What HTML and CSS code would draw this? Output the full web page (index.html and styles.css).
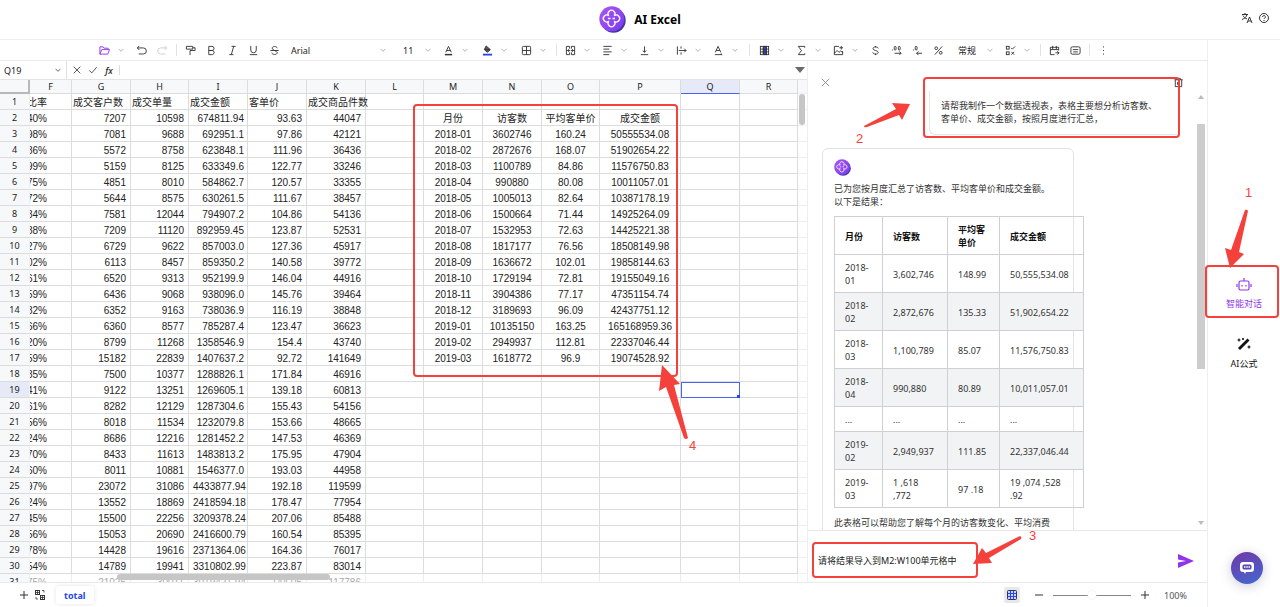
FILE: index.html
```html
<!DOCTYPE html>
<html lang="zh-CN">
<head>
<meta charset="utf-8">
<title>AI Excel</title>
<link rel="stylesheet" href="styles.css">
</head>
<body>
<svg class="defs" aria-hidden="true">
  <defs>
    <linearGradient id="badge" x1="0" y1="0" x2="1" y2="1"><stop offset="0" stop-color="#a855f7"/><stop offset="1" stop-color="#7c3aed"/></linearGradient>
    <symbol id="chev" viewBox="0 0 6 6"><path d="M0.500 1.800l2.500 2.500 2.500-2.500" fill="none" stroke="currentColor" stroke-width="0.900"/></symbol>
    <symbol id="logo" viewBox="0 0 27 27">
      <circle cx="14.5" cy="14.5" r="12.2" fill="#4338a8"/>
      <circle cx="12.8" cy="12.8" r="12.5" fill="url(#badge)"/>
      <path d="M9.800 9.800a3.400 3.400 0 1 1 5.400 0a3.400 3.400 0 1 1 0 5.400a3.400 3.400 0 1 1-5.400 0a3.400 3.400 0 1 1 0-5.400M9 12.500h2.500M13.500 12.500H16" fill="none" stroke="#fff" stroke-width="1.300"/>
    </symbol>
  </defs>
</svg>

<header class="topbar">
  <div class="brand"><svg class="brand-logo"><use href="#logo"/></svg><h1>AI Excel</h1></div>
  <div class="top-actions">
    <button aria-label="语言"><svg class="ico" viewBox="0 0 12 12"><path d="M1 2.5h6M4 1v1.500M6 2.500C5.500 5 3.500 6.500 1 7.500M2 3.500C3 5.500 4.500 6.500 6 7M6 11l2.500-6 2.500 6M7 9h3"/></svg></button>
    <button aria-label="帮助"><svg class="ico" viewBox="0 0 12 12"><circle cx="6" cy="6" r="4.500"/><path d="M4.600 5a1.400 1.400 0 1 1 2 1.200Q6 6.500 6 7M6 8v1"/></svg></button>
  </div>
</header>

<div class="shell">
  <div class="workspace">
    <div class="toolbar" role="toolbar">
      <button class="tool purple" aria-label="打开"><svg class="ico" viewBox="0 0 12 12"><path d="M1 10V2h3.500l1 1.500H10V5M1 10l2-5h8.500l-2 5z"/></svg></button><button class="chev" aria-label="更多"><svg><use href="#chev"/></svg></button>
      <button class="tool" aria-label="撤销"><svg class="ico" viewBox="0 0 12 12"><path d="M3.500 1L1.500 3.200l2 2.200M1.500 3.200H8a3.300 3.300 0 0 1 0 6.600H3"/></svg></button>
      <button class="tool off" aria-label="重做"><svg class="ico" viewBox="0 0 12 12"><path d="M8.500 1l2 2.200-2 2.200M10.500 3.200H4a3.300 3.300 0 0 0 0 6.600h5"/></svg></button>
      <i class="sep"></i>
      <button class="tool" aria-label="格式刷"><svg class="ico" viewBox="0 0 12 12"><path d="M1.500 1.500h7v3h-7zM8.500 3H11v3H5.500v2M5.500 8v3"/></svg></button>
      <button class="tool" aria-label="粗体"><svg class="ico" viewBox="0 0 12 12"><path d="M3 1.500h3.500a2.200 2.200 0 0 1 0 4.500H3zM3 6h4a2.300 2.300 0 0 1 0 4.500H3z"/></svg></button>
      <button class="tool" aria-label="斜体"><svg class="ico" viewBox="0 0 12 12"><path d="M5 1.500h4.500M2.500 10.500H7M7.300 1.500l-2.600 9"/></svg></button>
      <button class="tool" aria-label="下划线"><svg class="ico" viewBox="0 0 12 12"><path d="M3 1v4.500a3 3 0 0 0 6 0V1M2 10.500h8"/></svg></button>
      <button class="tool" aria-label="删除线"><svg class="ico" viewBox="0 0 12 12"><path d="M9 3.500C8.500 1 3.500 1 3.500 3.500Q3.500 5 6 6t3 2.300c0 2.700-5.500 2.700-6 0M1.500 6h9"/></svg></button>
      <button class="pick font">Arial</button><button class="chev" aria-label="字体"><svg><use href="#chev"/></svg></button>
      <button class="pick size">11</button><button class="chev" aria-label="字号"><svg><use href="#chev"/></svg></button>
      <button class="tool" aria-label="文字颜色"><svg class="ico" viewBox="0 0 12 12"><path d="M3 8l3-6.500L9 8M4 6h4"/><path d="M2 10.500h8" stroke-width="1.600"/></svg></button><button class="chev wide" aria-label="更多"><svg><use href="#chev"/></svg></button>
      <button class="tool" aria-label="填充颜色"><svg class="ico" viewBox="0 0 12 12"><path d="M4.500 1l4.500 4-3 3-3.500-3zM3 5h6" fill="#555"/><path d="M1 10.500h10" stroke="#2647f0" stroke-width="2"/></svg></button><button class="chev wide" aria-label="更多"><svg><use href="#chev"/></svg></button>
      <button class="tool" aria-label="边框"><svg class="ico" viewBox="0 0 12 12"><rect x="1.500" y="1.500" width="9" height="9" rx="1"/><path d="M6 1.500v9M1.500 6h9"/></svg></button><button class="chev" aria-label="更多"><svg><use href="#chev"/></svg></button>
      <i class="sep"></i>
      <button class="tool" aria-label="合并"><svg class="ico" viewBox="0 0 12 12"><path d="M5 4V1.500H1.500v9H5V8M7 4V1.500h3.500v9H7V8M1.500 6H5M7 6h3.500M3.500 4.500L5 6 3.500 7.500M8.500 4.500L7 6l1.500 1.500"/></svg></button><button class="chev" aria-label="更多"><svg><use href="#chev"/></svg></button>
      <button class="tool" aria-label="水平对齐"><svg class="ico" viewBox="0 0 12 12"><path d="M1.500 1.500h9M1.500 4.500H8M1.500 7.500h9M1.500 10.500H8"/></svg></button><button class="chev" aria-label="更多"><svg><use href="#chev"/></svg></button>
      <button class="tool" aria-label="垂直对齐"><svg class="ico" viewBox="0 0 12 12"><path d="M6 1.500V8M4 6l2 2 2-2M2 10.500h8"/></svg></button><button class="chev" aria-label="更多"><svg><use href="#chev"/></svg></button>
      <button class="tool" aria-label="换行"><svg class="ico" viewBox="0 0 12 12"><path d="M1.500 1.500v9M5.500 1.500v2.500M5.500 8v2.500M3 6h8M9 4l2 2-2 2"/></svg></button><button class="chev" aria-label="更多"><svg><use href="#chev"/></svg></button>
      <button class="tool" aria-label="旋转"><svg class="ico" viewBox="0 0 12 12"><path d="M2.500 8l3-6.500 3 6.500M3.500 6h4M2 10.500h8l-1.500-1.300"/></svg></button><button class="chev" aria-label="更多"><svg><use href="#chev"/></svg></button>
      <i class="sep mid"></i>
      <button class="tool" aria-label="冻结"><svg class="ico" viewBox="0 0 12 12"><rect x="5" y="1.500" width="3" height="9" fill="#2647f0"/><rect x="1.500" y="1.500" width="9" height="9"/><path d="M4.500 1.500v9M8 1.500v9M1.500 4.500h9M1.500 7.500h9"/></svg></button><button class="chev" aria-label="更多"><svg><use href="#chev"/></svg></button>
      <button class="tool" aria-label="求和"><svg class="ico" viewBox="0 0 12 12"><path d="M9.500 3V1.500h-7L6 6l-3.500 4.500h7V9"/></svg></button><button class="chev" aria-label="更多"><svg><use href="#chev"/></svg></button>
      <button class="tool" aria-label="图片"><svg class="ico" viewBox="0 0 12 12"><path d="M6.500 1.500h-5v9h9v-4M1.500 9L4.500 6l2 2 2-1.500 2 2M9 1v4M7 3h4"/></svg></button><button class="chev" aria-label="更多"><svg><use href="#chev"/></svg></button>
      <button class="tool" aria-label="货币"><svg class="ico" viewBox="0 0 12 12"><path d="M9 3.700C8.500 1.500 3.300 1.500 3.300 4Q3.300 5.400 6 6t3 2c0 2.600-5.500 2.600-6 0M6 1v1.500M6 9.500V11"/></svg></button>
      <button class="tool" aria-label="增加小数位"><svg class="ico" viewBox="0 0 12 12"><path d="M1 5.500h1"/><rect x="3.500" y="1.500" width="2" height="4" rx="1"/><rect x="8" y="1.500" width="2" height="4" rx="1"/><path d="M4 9h7M9 7l2 2-2 2"/></svg></button>
      <button class="tool" aria-label="减少小数位"><svg class="ico" viewBox="0 0 12 12"><path d="M1 5.500h1"/><rect x="3.500" y="1.500" width="2" height="4" rx="1"/><path d="M11 9H5M7 7L5 9l2 2"/></svg></button>
      <button class="tool" aria-label="百分比"><svg class="ico" viewBox="0 0 12 12"><path d="M10 1.500l-8 9"/><circle cx="3.500" cy="3.500" r="1.500"/><circle cx="8.500" cy="8.500" r="1.500"/></svg></button>
      <button class="pick format">常规</button><button class="chev" aria-label="格式"><svg><use href="#chev"/></svg></button>
      <button class="tool" aria-label="条件格式"><svg class="ico" viewBox="0 0 12 12"><rect x="1.500" y="1.500" width="3" height="3"/><rect x="1.500" y="7.500" width="3" height="3"/><path d="M6.500 3l1.500 1.500 3-3M7 7.500l3 3M10 7.500l-3 3"/></svg></button><button class="chev" aria-label="更多"><svg><use href="#chev"/></svg></button>
      <i class="sep"></i>
      <button class="tool" aria-label="表格工具"><svg class="ico" viewBox="0 0 12 12"><path d="M6 10.500H1.500v-8h9V6M1.500 5h9M4 1v4M8 1v4M7 8.500h4M9 7l2 1.500L9 10.500"/></svg></button>
      <button class="tool" aria-label="快捷键"><svg class="ico" viewBox="0 0 12 12"><rect x="1" y="2" width="10" height="8" rx="1.500"/><path d="M3 5h6M3.500 7.500h5"/></svg></button>
      <i class="sep"></i>
      <button class="tool" aria-label="更多"><svg class="ico" viewBox="0 0 12 12"><path d="M6 1.500v1.200M6 5.400v1.200M6 9.300v1.200"/></svg></button>
    </div>

    <div class="main">
      <section class="sheet">
        <div class="formula">
          <div class="namebox"><input type="text" value="Q19" aria-label="单元格"><svg><use href="#chev"/></svg></div>
          <button aria-label="取消"><svg class="ico" viewBox="0 0 12 12"><path d="M2 2l8 8M10 2l-8 8"/></svg></button>
          <button aria-label="确认"><svg class="ico" viewBox="0 0 12 12"><path d="M1.500 6.500L4.500 9.500l6-7"/></svg></button>
          <button class="fx" aria-label="函数">fx</button>
          <input class="expr" type="text" aria-label="公式">
          <svg class="expand" viewBox="0 0 10 6"><path d="M0 0h10L5 6z" fill="#6b6b6b"/></svg>
        </div>
        <div class="grid">
          <table id="cells"></table>
          <i class="vthumb"></i><i class="hthumb"></i>
        </div>
        <div class="mark result"></div>
        <svg class="arrow a4" viewBox="0 0 34 74"><path d="M3 0L0 26l7-4 18 51q2 2 4 0L15 20l6-1z"/></svg>
        <span class="num n4">4</span>
      </section>

      <aside class="chat">
        <div class="chat-head">
          <button aria-label="关闭"><svg class="ico grey" viewBox="0 0 12 12"><path d="M2 2l8 8M10 2l-8 8"/></svg></button>
          <button aria-label="清空"><svg class="ico" viewBox="0 0 12 12"><path d="M1.500 3h9M4 3V1.500h4V3M2.500 3v7.500h7V3M5 5.500v3M7 5.500v3"/></svg></button>
        </div>
        <div class="scroll">
          <div class="messages">
            <div class="ask">请帮我制作一个数据透视表，表格主要想分析访客数、客单价、成交金额，按照月度进行汇总，</div>
            <div class="answer">
              <svg class="avatar"><use href="#logo"/></svg>
              <p>已为您按月度汇总了访客数、平均客单价和成交金额。<br>以下是结果：</p>
              <table>
                <colgroup><col class="c1"><col class="c2"><col class="c3"><col class="c4"></colgroup>
                <thead><tr><th>月份</th><th>访客数</th><th>平均客单价</th><th>成交金额</th></tr></thead>
                <tbody>
                  <tr><td>2018-01</td><td>3,602,746</td><td>148.99</td><td>50,555,534.08</td></tr>
                  <tr><td>2018-02</td><td>2,872,676</td><td>135.33</td><td>51,902,654.22</td></tr>
                  <tr><td>2018-03</td><td>1,100,789</td><td>85.07</td><td>11,576,750.83</td></tr>
                  <tr><td>2018-04</td><td>990,880</td><td>80.89</td><td>10,011,057.01</td></tr>
                  <tr><td>...</td><td>...</td><td>...</td><td>...</td></tr>
                  <tr><td>2019-02</td><td>2,949,937</td><td>111.85</td><td>22,337,046.44</td></tr>
                  <tr><td>2019-03</td><td>1 ,618<br>,772</td><td>97 .18</td><td>19 ,074 ,528<br>.92</td></tr>
                </tbody>
              </table>
              <p>此表格可以帮助您了解每个月的访客数变化、平均消费</p>
            </div>
          </div>
          <div class="bar"><svg viewBox="0 0 6 4"><path d="M0 4l3-4 3 4z"/></svg><i></i><svg viewBox="0 0 6 4"><path d="M0 0l3 4 3-4z"/></svg></div>
        </div>
        <form class="composer">
          <input type="text" value="请将结果导入到M2:W100单元格中" aria-label="消息">
          <button type="button" aria-label="发送"><svg viewBox="0 0 16 14"><path d="M0 0l16 7-16 7V8.500L8 7 0 5.500z" fill="#9333ea"/></svg></button>
        </form>
        <div class="mark question"></div>
        <svg class="arrow a2" viewBox="0 0 48 26"><path d="M47 2L29 1l4 6L1 24q0 2 3 1l32-12 3 5z"/></svg>
        <span class="num n2">2</span>
        <div class="mark command"></div>
        <svg class="arrow a3" viewBox="0 0 50 30"><path d="M0 28L9 12l4 5L47 0q2 1 1 3L16 22l3 5z"/></svg>
        <span class="num n3">3</span>
      </aside>
    </div>

    <footer class="status">
      <button aria-label="新建工作表"><svg class="ico" viewBox="0 0 12 12"><path d="M6 2v8M2 6h8"/></svg></button>
      <button aria-label="所有工作表"><svg class="ico" viewBox="0 0 12 12"><rect x="1.500" y="1.500" width="4" height="4"/><rect x="6.500" y="6.500" width="4" height="4"/><path d="M3.500 1.500v4M1.500 3.500h4M8.500 6.500v4M6.500 8.500h4M8 1.500h2v2M2 8v2h2" stroke-width="0.800"/></svg></button>
      <button class="tab">total</button>
      <span class="space"></span>
      <button class="view" aria-label="网格视图"><svg class="ico" viewBox="0 0 12 12"><rect x="1.500" y="1.500" width="9" height="9" rx="1" fill="#c9d3ff"/><path d="M4.500 1.500v9M7.500 1.500v9M1.500 4.500h9M1.500 7.500h9" stroke="#2647f0"/></svg></button>
      <button aria-label="缩小"><svg class="ico" viewBox="0 0 12 12"><path d="M2 6h8"/></svg></button>
      <input class="zoom" type="range" min="0" max="100" value="50" aria-label="缩放">
      <button aria-label="放大"><svg class="ico" viewBox="0 0 12 12"><path d="M6 2v8M2 6h8"/></svg></button>
      <span class="percent">100%</span>
    </footer>
  </div>

  <nav class="rail">
    <button class="rail-item active"><svg viewBox="0 0 16 14"><rect x="3" y="4" width="10" height="9" rx="1.500"/><path d="M8 1v3M1 7v3M15 7v3M6 8v1.500M10 8v1.500"/></svg>智能对话</button>
    <button class="rail-item"><svg viewBox="0 0 16 14"><path d="M3 12L12.500 2.500" stroke-width="2.800"/><path d="M3 1.500v3M1.500 3h3M7 1v2M6 2h2M13 8.500v3M11.500 10h3"/></svg>AI公式</button>
    <button class="fab" aria-label="客服"><svg viewBox="0 0 16 14"><path d="M4 1h8a3 3 0 0 1 3 3v4a3 3 0 0 1-3 3H7l-1 2-1-2H4a3 3 0 0 1-3-3V4a3 3 0 0 1 3-3z" fill="#fff"/><rect x="3.500" y="3.500" width="9" height="5" rx="1.500" fill="#5b46b8"/><path d="M5 6h1.500M7.300 6h1.500M9.500 6H11" stroke="#fff" stroke-width="1.500"/></svg></button>
    <div class="mark talk"></div>
    <svg class="arrow a1" viewBox="0 0 20 60"><path d="M5 59L0 39l6 2L20 1q2-1 3 1l-9 41 5 2z"/></svg>
    <span class="num n1">1</span>
  </nav>
</div>
<script src="app.js"></script>
</body>
</html>
```
FILE: styles.css
```css
* { box-sizing: border-box; }
body {
  margin: 0;
  height: 100vh;
  display: flex;
  flex-direction: column;
  overflow: hidden;
  background: #fff;
  color: #222;
  font: 9px/13px "Noto Sans", "Noto Sans CJK SC", sans-serif;
}
button, input { font: inherit; color: inherit; border: 0; padding: 0; margin: 0; background: none; outline: 0; }
button { display: flex; align-items: center; justify-content: center; flex: none; }
svg { display: block; flex: none; }
.defs { width: 0; height: 0; position: absolute; }
.ico { width: 12px; height: 12px; fill: none; stroke: #333; stroke-width: 1; overflow: visible; }
.grey { stroke: #888; }

.topbar { height: 40px; flex: none; border-bottom: 1px solid #eee; display: grid; grid-template-columns: 1fr auto 1fr; align-items: center; }
.brand { grid-column: 2; display: flex; align-items: center; gap: 8px; }
.brand-logo { width: 27px; height: 27px; }
.brand h1 { margin: 0; font-size: 12px; line-height: 16px; font-weight: 700; color: #000; }
.top-actions { justify-self: end; display: flex; gap: 5px; padding: 0 10px 4px 0; }

.shell { flex: 1; min-height: 0; display: flex; }
.workspace { flex: 1; min-width: 0; display: flex; flex-direction: column; }

.toolbar { height: 21px; flex: none; display: flex; align-items: center; padding-left: 94px; border-bottom: 1px solid #eaeaea; }
.tool { width: 21px; height: 20px; }
.tool .ico { width: 11px; height: 11px; }
.purple .ico { stroke: #9333ea; }
.off .ico { stroke: #ccc; }
.chev { width: 12px; height: 20px; margin-right: 4px; color: #aaa; }
.chev svg { width: 6px; height: 6px; }
.wide { margin-right: 6px; }
.pick { height: 20px; justify-content: flex-start; }
.font { width: 92px; padding-left: 6px; }
.size { width: 29px; padding-left: 10px; }
.format { width: 35px; padding-left: 9px; }
.sep { flex: none; width: 1px; height: 12px; margin: 0 3px; background: #e2e2e2; }
.mid { margin: 0 4px; }

.main { flex: 1; min-height: 0; display: flex; }
.sheet { flex: 1; min-width: 0; display: flex; flex-direction: column; position: relative; }
.formula { height: 19px; flex: none; display: flex; align-items: center; border-bottom: 1px solid #e4e4e4; padding-right: 2px; }
.formula button { width: 16px; }
.formula .ico { width: 10px; height: 10px; }
.namebox { width: 67px; height: 18px; margin-right: 2px; display: flex; align-items: center; padding: 0 5px 0 4px; border-right: 1px solid #e0e0e0; }
.namebox input { flex: 1; min-width: 0; }
.namebox svg { width: 6px; height: 6px; color: #555; }
.formula .fx { font-style: italic; font-weight: 500; }
.expr { flex: 1; min-width: 0; height: 10px; margin-left: 2px; border-left: 1px solid #ddd; }
.expand { width: 10px; height: 6px; }

.grid { flex: 1; min-height: 0; position: relative; overflow: hidden; }
.grid table { width: 100%; table-layout: fixed; border-spacing: 0; font: 10px/13px "Liberation Sans", "Noto Sans CJK SC", sans-serif; color: #222; }
.grid th, .grid td { padding: 2px 4px 0; height: 16px; border: solid #dcdcdc; border-width: 0 1px 1px 0; white-space: nowrap; text-align: right; overflow: hidden; }
.grid td:nth-child(5) { padding-right: 3px; }
.grid th { background: #f7f8fa; font: 9px/13px "Noto Sans", sans-serif; text-align: center; padding: 0; }
.grid tbody th { border-right-color: #f0f0f0; }
.grid thead th { height: 14px; line-height: 12px; }
.grid thead .corner { border: solid #b8b8b8; border-width: 0 2px 2px 0; }
.grid .label { text-align: left; padding: 2px 0 0 1px; overflow: visible; }
.grid .mid-text { text-align: center; padding: 2px 0 0; }
.grid .part { padding: 2px 0 0; }
.part span { display: flex; justify-content: flex-end; width: 17px; overflow: hidden; }
.grid thead .on, .grid tbody th.on { background: #e6e9f8; }
.grid thead .on { border-bottom-color: #4a66f0; }
.grid .gutter { border-right: 0; border-bottom-color: #f0f0f0; }
.grid .picked { position: relative; overflow: visible; outline: 1px solid #4a66f0; outline-offset: -1px; }
.picked::after { content: ""; position: absolute; right: -1px; bottom: -1px; width: 3px; height: 3px; background: #2647f0; }
.grid .last td { color: #aaa; border-color: #eee; }
.c-row { width: 30px; } .c-f { width: 42px; } .c-58 { width: 58px; } .c-59 { width: 59px; } .c-81 { width: 81px; }
.vthumb, .hthumb { position: absolute; background: #c6c6c6; border-radius: 4px; }
.vthumb { right: 2px; top: 14px; width: 6px; height: 31px; }
.hthumb { left: 117px; bottom: 2px; width: 213px; height: 6px; }

.chat { width: 400px; flex: none; display: flex; flex-direction: column; position: relative; border-left: 1px solid #eee; color: #333; }
.chat-head { flex: none; height: 30px; padding: 12px 23px 0 12px; display: flex; justify-content: space-between; align-items: center; }
.chat-head .ico { width: 11px; height: 11px; }
.scroll { flex: 1; min-height: 0; display: flex; overflow: hidden; }
.messages { flex: 1; min-width: 0; padding-left: 14px; display: flex; flex-direction: column; align-items: flex-start; }
.ask { flex: none; align-self: flex-end; width: 248px; margin-right: 20px; padding: 8px 16px 9px 11px; border: 1px solid #e5e5e5; border-width: 0 0 1px 1px; border-radius: 0 0 0 6px; }
.answer { flex: none; width: 252px; margin-top: 13px; padding: 10px 10px 10px 11px; border: 1px solid #e2e2e6; border-radius: 6px; }
.avatar { width: 17px; height: 17px; margin-bottom: 6px; }
.answer p { margin: 0 0 8px; white-space: nowrap; }
.answer table { width: 249px; table-layout: fixed; border-collapse: collapse; margin-bottom: 8px; }
.answer th, .answer td { border: 1px solid #cfcfd4; padding: 6px 10px 5px; height: 38px; text-align: left; }
.answer th { color: #111; padding-right: 8px; }
.answer tbody tr:nth-child(5) td { height: 25px; }
.answer tbody tr:nth-child(even) td { background: #f2f3f5; }
.c1 { width: 48px; } .c2 { width: 65px; } .c3 { width: 52px; } .c4 { width: 84px; }
.bar { width: 10px; flex: none; display: flex; flex-direction: column; align-items: center; padding: 4px 2px 5px 0; }
.bar svg { width: 6px; height: 4px; fill: #bbb; }
.bar i { width: 8px; height: 245px; background: #cdcdcd; margin: 25px 0 auto; }
.composer { flex: none; height: 52px; display: flex; align-items: center; gap: 12px; padding: 8px 13px 0 10px; border-top: 1px solid #e8e8e8; }
.composer input { flex: 1; min-width: 0; color: #222; }
.composer svg { width: 16px; height: 14px; }

.status { height: 25px; flex: none; display: flex; align-items: center; border-top: 1px solid #eaeaea; padding: 0 20px 0 18px; gap: 4px; }
.tab { height: 18px; padding: 0 8px; margin-left: 6px; color: #2647f0; font-weight: 700; border-radius: 3px; box-shadow: 0 0 4px #e4e4e4; }
.space { flex: 1; }
.view { width: 16px; height: 16px; background: #e8e8ec; border-radius: 2px; margin-right: 9px; }
.zoom { appearance: none; width: 78px; height: 12px; margin: 0 4px; }
.zoom::-webkit-slider-runnable-track { height: 1px; background: #888; }
.zoom::-webkit-slider-thumb { appearance: none; width: 8px; height: 8px; margin-top: -4px; border-radius: 50%; background: #fff; box-shadow: 0 0 2px #ddd; }
.percent { margin-left: 9px; color: #555; }

.rail { width: 73px; flex: none; border-left: 1px solid #eee; position: relative; display: flex; flex-direction: column; align-items: center; gap: 27px; padding-top: 237px; }
.rail-item { flex-direction: column; gap: 6px; color: #111; }
.rail-item svg { width: 16px; height: 14px; fill: none; stroke: currentColor; stroke-width: 1.2; }
.active { color: #9333ea; }
.fab { position: absolute; right: 17px; bottom: 23px; width: 32px; height: 32px; border-radius: 50%; background: linear-gradient(160deg, #7038a8, #4468d0); box-shadow: 0 2px 12px #ccd; }
.fab svg { width: 16px; height: 14px; }

.mark { position: absolute; border: 2px solid #f5413b; border-radius: 4px; pointer-events: none; }
.arrow { position: absolute; fill: #f5413b; overflow: visible; pointer-events: none; }
.num { position: absolute; color: #f5413b; font: 13px/16px "Liberation Sans", sans-serif; }
.result { left: 413px; top: 43px; width: 265px; height: 273px; }
.a4 { left: 659px; top: 304px; width: 34px; height: 74px; }
.n4 { left: 689px; top: 377px; }
.question { right: 27px; top: 16px; width: 257px; height: 61px; }
.a2 { left: 55px; top: 41px; width: 48px; height: 26px; }
.n2 { left: 48px; top: 70px; }
.command { left: 4px; bottom: 4px; width: 166px; height: 36px; }
.a3 { left: 165px; bottom: 16px; width: 50px; height: 30px; }
.n3 { left: 221px; bottom: 38px; }
.talk { left: -3px; top: 225px; width: 74px; height: 53px; }
.a1 { left: 17px; top: 169px; width: 20px; height: 60px; }
.n1 { left: 37px; top: 145px; }
```
FILE: app.js
```js
const columns = ["F", "G", "H", "I", "J", "K", "L", "M", "N", "O", "P", "Q", "R"];
const widths = ["row", "f", "59", "58", "59", "59", "59", "58", "59", "59", "58", "81", "59", "58"];

const orders = [
  ["比率", "成交客户数", "成交单量", "成交金额", "客单价", "成交商品件数"],
  ["40%", "7207", "10598", "674811.94", "93.63", "44047"],
  ["98%", "7081", "9688", "692951.1", "97.86", "42121"],
  ["86%", "5572", "8758", "623848.1", "111.96", "36436"],
  ["99%", "5159", "8125", "633349.6", "122.77", "33246"],
  ["75%", "4851", "8010", "584862.7", "120.57", "33355"],
  ["72%", "5644", "8575", "630261.5", "111.67", "38457"],
  ["84%", "7581", "12044", "794907.2", "104.86", "54136"],
  ["88%", "7209", "11120", "892959.45", "123.87", "52531"],
  ["27%", "6729", "9622", "857003.0", "127.36", "45917"],
  ["02%", "6113", "8457", "859350.2", "140.58", "39772"],
  ["61%", "6520", "9313", "952199.9", "146.04", "44916"],
  ["59%", "6436", "9068", "938096.0", "145.76", "39464"],
  ["82%", "6352", "9163", "738036.9", "116.19", "38848"],
  ["66%", "6360", "8577", "785287.4", "123.47", "36623"],
  ["20%", "8799", "11268", "1358546.9", "154.4", "43740"],
  ["59%", "15182", "22839", "1407637.2", "92.72", "141649"],
  ["85%", "7500", "10377", "1288826.1", "171.84", "46916"],
  ["41%", "9122", "13251", "1269605.1", "139.18", "60813"],
  ["61%", "8282", "12129", "1287304.6", "155.43", "54156"],
  ["56%", "8018", "11534", "1232079.8", "153.66", "48665"],
  ["24%", "8686", "12216", "1281452.2", "147.53", "46369"],
  ["70%", "8433", "11613", "1483813.2", "175.95", "47904"],
  ["60%", "8011", "10881", "1546377.0", "193.03", "44958"],
  ["97%", "23072", "31086", "4433877.94", "192.18", "119599"],
  ["24%", "13552", "18869", "2418594.18", "178.47", "77954"],
  ["45%", "15500", "22256", "3209378.24", "207.06", "85488"],
  ["56%", "15053", "20690", "2416600.79", "160.54", "85395"],
  ["78%", "14428", "19616", "2371364.06", "164.36", "76017"],
  ["54%", "14789", "19941", "3310802.99", "223.87", "83014"],
  ["75%", "21025", "30011", "3019421.94", "144.05", "117786"]
];

const summary = [
  [], ["月份", "访客数", "平均客单价", "成交金额"],
  ["2018-01", "3602746", "160.24", "50555534.08"],
  ["2018-02", "2872676", "168.07", "51902654.22"],
  ["2018-03", "1100789", "84.86", "11576750.83"],
  ["2018-04", "990880", "80.08", "10011057.01"],
  ["2018-05", "1005013", "82.64", "10387178.19"],
  ["2018-06", "1500664", "71.44", "14925264.09"],
  ["2018-07", "1532953", "72.63", "14425221.38"],
  ["2018-08", "1817177", "76.56", "18508149.98"],
  ["2018-09", "1636672", "102.01", "19858144.63"],
  ["2018-10", "1729194", "72.81", "19155049.16"],
  ["2018-11", "3904386", "77.17", "47351154.74"],
  ["2018-12", "3189693", "96.09", "42437751.12"],
  ["2019-01", "10135150", "163.25", "165168959.36"],
  ["2019-02", "2949937", "112.81", "22337046.44"],
  ["2019-03", "1618772", "96.9", "19074528.92"]
];

const active = { row: 19, col: "Q" };

function cell(row, index) {
  const name = columns[index];
  if (index === 0) return `<td class="part"><span>${orders[row - 1][0]}</span></td>`;
  if (index < 6) return `<td${row === 1 ? ' class="label"' : ""}>${orders[row - 1][index]}</td>`;
  if (index > 6 && index < 11) return `<td class="mid-text">${(summary[row - 1] || [])[index - 7] || ""}</td>`;
  return `<td${name === active.col && row === active.row ? ' class="picked"' : ""}></td>`;
}

const cols = widths.map(w => `<col class="c-${w}">`).join("") + "<col>";
const head = columns.map(c => `<th${c === active.col ? ' class="on"' : ""}>${c}</th>`).join("");
const body = orders.map((_, i) => {
  const row = i + 1;
  const cells = columns.map((_, c) => cell(row, c)).join("");
  return `<tr${row === orders.length ? ' class="last"' : ""}><th${row === active.row ? ' class="on"' : ""}>${row}</th>${cells}<td class="gutter"></td></tr>`;
}).join("");

document.getElementById("cells").innerHTML =
  `<colgroup>${cols}</colgroup><thead><tr><th class="corner"></th>${head}<th class="gutter"></th></tr></thead><tbody>${body}</tbody>`;
```
